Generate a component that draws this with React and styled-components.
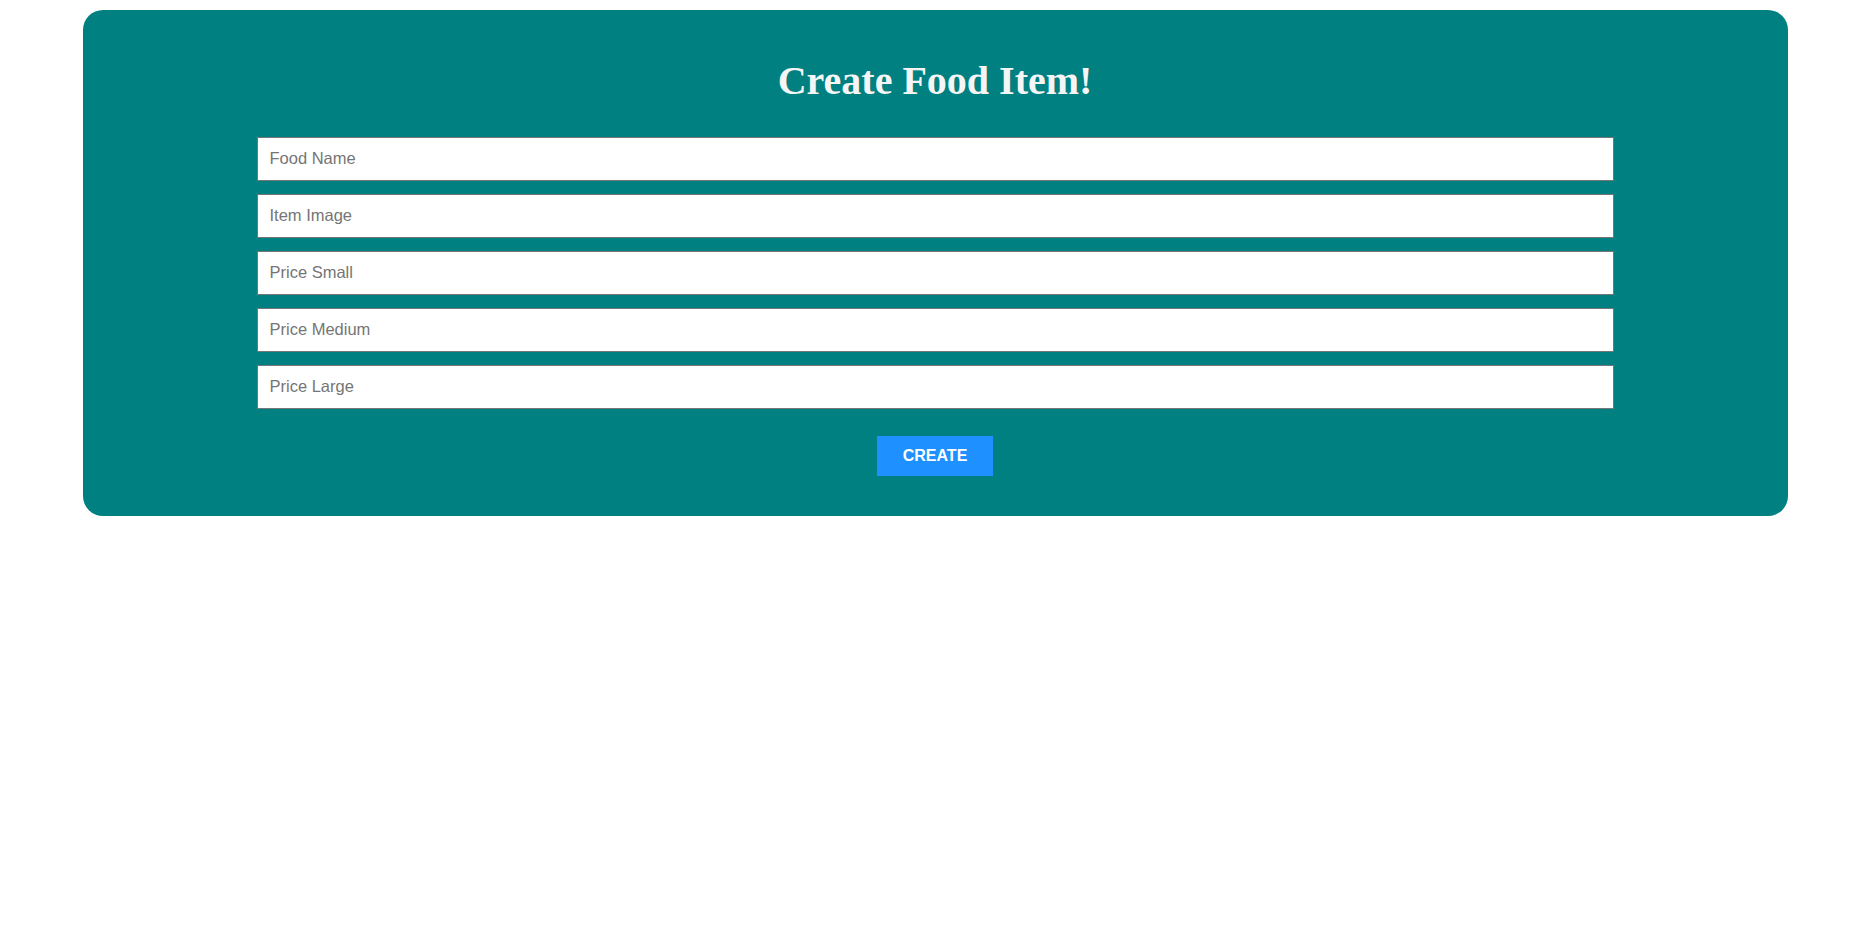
import React from 'react';
import styled, { createGlobalStyle } from 'styled-components';

const GlobalStyle = createGlobalStyle`
  body {
    margin: 0;
    background-color: #fff;
    font-family: "Liberation Serif", "Times New Roman", serif;
  }
`;

const Page = styled.div`
  width: 100%;
  min-height: 100vh;
  padding-top: 10px;
  box-sizing: border-box;
`;

const Card = styled.div`
  width: 1705px;
  margin: 0 auto;
  background-color: #008080;
  border-radius: 20px;
  padding: 48px 0 40px;
  box-sizing: border-box;
  display: flex;
  flex-direction: column;
  align-items: center;
`;

const Title = styled.h1`
  margin: 0 0 33px;
  font-family: "Liberation Serif", "Times New Roman", serif;
  font-size: 40px;
  line-height: 46px;
  font-weight: bold;
  color: #f5f5f5;
`;

const Form = styled.form`
  width: 1357px;
  display: flex;
  flex-direction: column;
  align-items: center;
  gap: 13px;
`;

const Input = styled.input`
  width: 100%;
  height: 44px;
  box-sizing: border-box;
  border: 1px solid #767676;
  padding: 0 11px 2px 12px;
  font-family: "Liberation Sans", Arial, sans-serif;
  font-size: 16.5px;
  background-color: #fff;
  outline: none;

  &::placeholder {
    color: #757575;
  }
`;

const Button = styled.button`
  margin-top: 14px;
  height: 40px;
  padding: 0 26px;
  border: none;
  background-color: #1e90ff;
  color: #fff;
  font-family: "Liberation Sans", Arial, sans-serif;
  font-size: 16px;
  font-weight: bold;
  cursor: pointer;
`;

const fields = ['Food Name', 'Item Image', 'Price Small', 'Price Medium', 'Price Large'];

const App = () => {
  return (
    <>
      <GlobalStyle />
      <Page>
        <Card>
          <Title>Create Food Item!</Title>
          <Form onSubmit={e => e.preventDefault()}>
            {fields.map(name => (
              <Input key={name} type="text" placeholder={name} />
            ))}
            <Button type="submit">CREATE</Button>
          </Form>
        </Card>
      </Page>
    </>
  );
};

export default App;
